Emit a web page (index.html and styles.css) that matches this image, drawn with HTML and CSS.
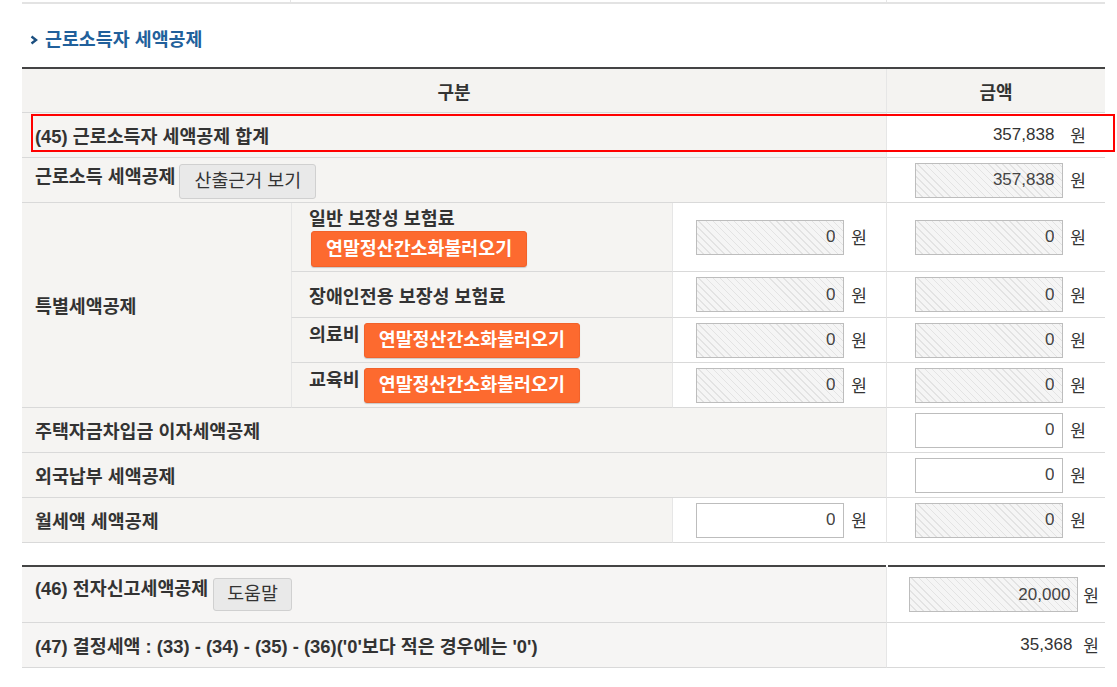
FILE: index.html
```html
<!DOCTYPE html>
<html lang="ko">
<head>
<meta charset="utf-8">
<title>근로소득자 세액공제</title>
<link rel="stylesheet" href="styles.css">
</head>
<body>
<div class="page">
  <div class="prev"><span></span><span></span><span></span></div>

  <h3 class="title"><svg class="chev" width="8" height="10" viewBox="0 0 8 10"><path d="M1.5 1.5 L6 5 L1.5 8.5" fill="none" stroke="#1b4f80" stroke-width="2.4"/></svg>근로소득자 세액공제</h3>

  <div class="tbl-wrap">
    <div class="grid main">
      <div class="c th span3">구분</div>
      <div class="c th bl">금액</div>

      <div class="c lbl span3">(45) 근로소득자 세액공제 합계</div>
      <div class="c val bl"><span class="num">357,838</span><span class="won">원</span></div>

      <div class="c lbl span3 top"><span class="t">근로소득 세액공제</span><button class="btn gray">산출근거 보기</button></div>
      <div class="c val bl"><input class="inp ro" type="text" value="357,838" readonly><span class="won">원</span></div>

      <div class="c lbl rs4">특별세액공제</div>
      <div class="c lbl sub stack bl"><span class="t">일반 보장성 보험료</span><button class="btn orange">연말정산간소화불러오기</button></div>
      <div class="c val bl"><input class="inp ro" type="text" value="0" readonly><span class="won">원</span></div>
      <div class="c val bl"><input class="inp ro" type="text" value="0" readonly><span class="won">원</span></div>

      <div class="c lbl sub bl">장애인전용 보장성 보험료</div>
      <div class="c val bl"><input class="inp ro" type="text" value="0" readonly><span class="won">원</span></div>
      <div class="c val bl"><input class="inp ro" type="text" value="0" readonly><span class="won">원</span></div>

      <div class="c lbl sub top bl"><span class="t">의료비</span><button class="btn orange">연말정산간소화불러오기</button></div>
      <div class="c val bl"><input class="inp ro" type="text" value="0" readonly><span class="won">원</span></div>
      <div class="c val bl"><input class="inp ro" type="text" value="0" readonly><span class="won">원</span></div>

      <div class="c lbl sub top bl"><span class="t">교육비</span><button class="btn orange">연말정산간소화불러오기</button></div>
      <div class="c val bl"><input class="inp ro" type="text" value="0" readonly><span class="won">원</span></div>
      <div class="c val bl"><input class="inp ro" type="text" value="0" readonly><span class="won">원</span></div>

      <div class="c lbl span3">주택자금차입금 이자세액공제</div>
      <div class="c val bl"><input class="inp" type="text" value="0"><span class="won">원</span></div>

      <div class="c lbl span3">외국납부 세액공제</div>
      <div class="c val bl"><input class="inp" type="text" value="0"><span class="won">원</span></div>

      <div class="c lbl span2">월세액 세액공제</div>
      <div class="c val bl"><input class="inp" type="text" value="0"><span class="won">원</span></div>
      <div class="c val bl"><input class="inp ro" type="text" value="0" readonly><span class="won">원</span></div>
    </div>
    <div class="highlight"></div>
  </div>

  <div class="grid second">
    <div class="c lbl2 top46"><span class="t">(46) 전자신고세액공제</span><button class="btn gray small">도움말</button></div>
    <div class="c val2 bl first"><input class="inp ro wide" type="text" value="20,000" readonly><span class="won">원</span></div>

    <div class="c lbl2">(47) 결정세액 : (33) - (34) - (35) - (36)('0'보다 적은 경우에는 '0')</div>
    <div class="c val2 bl"><span class="num wide">35,368</span><span class="won">원</span></div>
  </div>
</div>
</body>
</html>
```

FILE: styles.css
```css
html, body {
  margin: 0;
  padding: 0;
  background: #fff;
}

body {
  font-family: "Liberation Sans", "Noto Sans CJK KR", sans-serif;
  color: #333;
  font-size: 18.4px;
}

.page {
  width: 1083px;
  padding-left: 22px;
}

.prev {
  display: grid;
  grid-template-columns: 268px 596px 219px;
  height: 2px;
  border-bottom: 2px solid #e3e3e3;
}

.prev span + span {
  border-left: 1px solid #e6e6e6;
}

.title {
  margin: 24px 0 15px 0;
  padding-left: 8px;
  display: flex;
  align-items: center;
  gap: 7px;
  font-size: 18.4px;
  line-height: 24px;
  font-weight: 700;
  color: #21609b;
}

.chev {
  display: block;
}

.tbl-wrap {
  position: relative;
}

.grid {
  display: grid;
  grid-template-columns: 269px 381px 214px 219px;
}

.main {
  border-top: 2px solid #444;
  grid-template-rows: 44px 45px 45px 69px 46px 45px 45px 45px 45px 45px;
}

.c {
  box-sizing: border-box;
  border-bottom: 1px solid #d9d9d9;
  display: flex;
  align-items: center;
  min-width: 0;
}

.bl {
  border-left: 1px solid #e6e6e6;
}

.span3 { grid-column: span 3; }
.span2 { grid-column: span 2; }
.rs4 { grid-row: span 4; }

.th {
  background: #f4f3f1;
  justify-content: center;
  font-weight: 700;
  font-size: 18px;
}

.lbl {
  background: #f5f4f2;
  padding: 0 13px;
  font-weight: 700;
  white-space: nowrap;
}

.lbl.sub {
  padding-left: 17px;
}

.lbl.top {
  align-items: flex-start;
  padding-top: 5px;
  gap: 4px;
}

.lbl.span3.top {
  padding-top: 6px;
}

.lbl.top .t {
  line-height: 24px;
}

.lbl.span3.top .t {
  line-height: 26px;
}

.lbl.stack {
  flex-direction: column;
  align-items: flex-start;
  justify-content: flex-start;
  padding-top: 3px;
}

.lbl.stack .t {
  line-height: 25px;
}

.lbl.stack .btn {
  margin-left: 2px;
}

.val {
  background: #fff;
  justify-content: flex-end;
  padding-right: 19px;
  gap: 7px;
}

.won {
  font-family: "Noto Sans CJK KR", sans-serif;
  font-size: 17px;
  color: #333;
  line-height: 20px;
}

.num {
  box-sizing: border-box;
  width: 150px;
  text-align: right;
  padding-right: 9px;
  color: #333;
  font-size: 17px;
  line-height: 24px;
}

.inp {
  box-sizing: border-box;
  width: 148px;
  height: 35px;
  border: 1px solid #bdbdbd;
  background: #fff;
  padding: 0 8px;
  margin: 0;
  text-align: right;
  font-family: "Liberation Sans", "Noto Sans CJK KR", sans-serif;
  font-size: 17px;
  color: #444;
  outline: none;
}

.inp.ro {
  background: repeating-linear-gradient(45deg, #f5f5f5 0 4px, #e3e3e3 4px 5px);
}

.btn {
  box-sizing: border-box;
  font-family: "Liberation Sans", "Noto Sans CJK KR", sans-serif;
  font-size: 18.4px;
  margin: 0;
  border-radius: 3px;
  cursor: pointer;
  white-space: nowrap;
  line-height: 1;
}

.btn.gray {
  height: 35px;
  padding: 0 14px;
  background: #e9e9e9;
  border: 1px solid #d0d0d0;
  color: #333;
}

.btn.gray.small {
  height: 33px;
  padding: 0 13px;
}

.btn.orange {
  height: 35px;
  padding: 0 14px;
  background: #fd6a2f;
  border: 1px solid #f2622a;
  color: #fff;
  font-weight: 700;
  box-shadow: 0 1px 1px rgba(0, 0, 0, 0.18);
}

.lbl.stack .btn.orange {
  height: 36px;
}

.highlight {
  position: absolute;
  left: 9px;
  top: 47px;
  width: 1084px;
  height: 38px;
  box-sizing: border-box;
  border: 2px solid #f00;
  pointer-events: none;
}

.second {
  margin-top: 22px;
  grid-template-columns: 864px 219px;
  grid-template-rows: 58px 45px;
}

.second .c:nth-child(1),
.second .c:nth-child(2) {
  border-top: 2px solid #444;
}

.val2.first {
  position: relative;
}

.val2.first::before {
  content: "";
  position: absolute;
  left: -1px;
  top: -2px;
  width: 2px;
  height: 2px;
  background: #fff;
}

.lbl2 {
  background: #f6f5f4;
  padding: 0 13px;
  font-weight: 700;
  white-space: nowrap;
}

.lbl2.top46 {
  align-items: flex-start;
  padding-top: 11px;
  gap: 5px;
}

.lbl2.top46 .t {
  line-height: 22px;
}

.val2 {
  background: #fff;
  justify-content: flex-end;
  padding-right: 6px;
  gap: 5px;
}

.inp.wide {
  width: 169px;
  padding-right: 7px;
}

.num.wide {
  width: 169px;
  padding-right: 6px;
}
```
